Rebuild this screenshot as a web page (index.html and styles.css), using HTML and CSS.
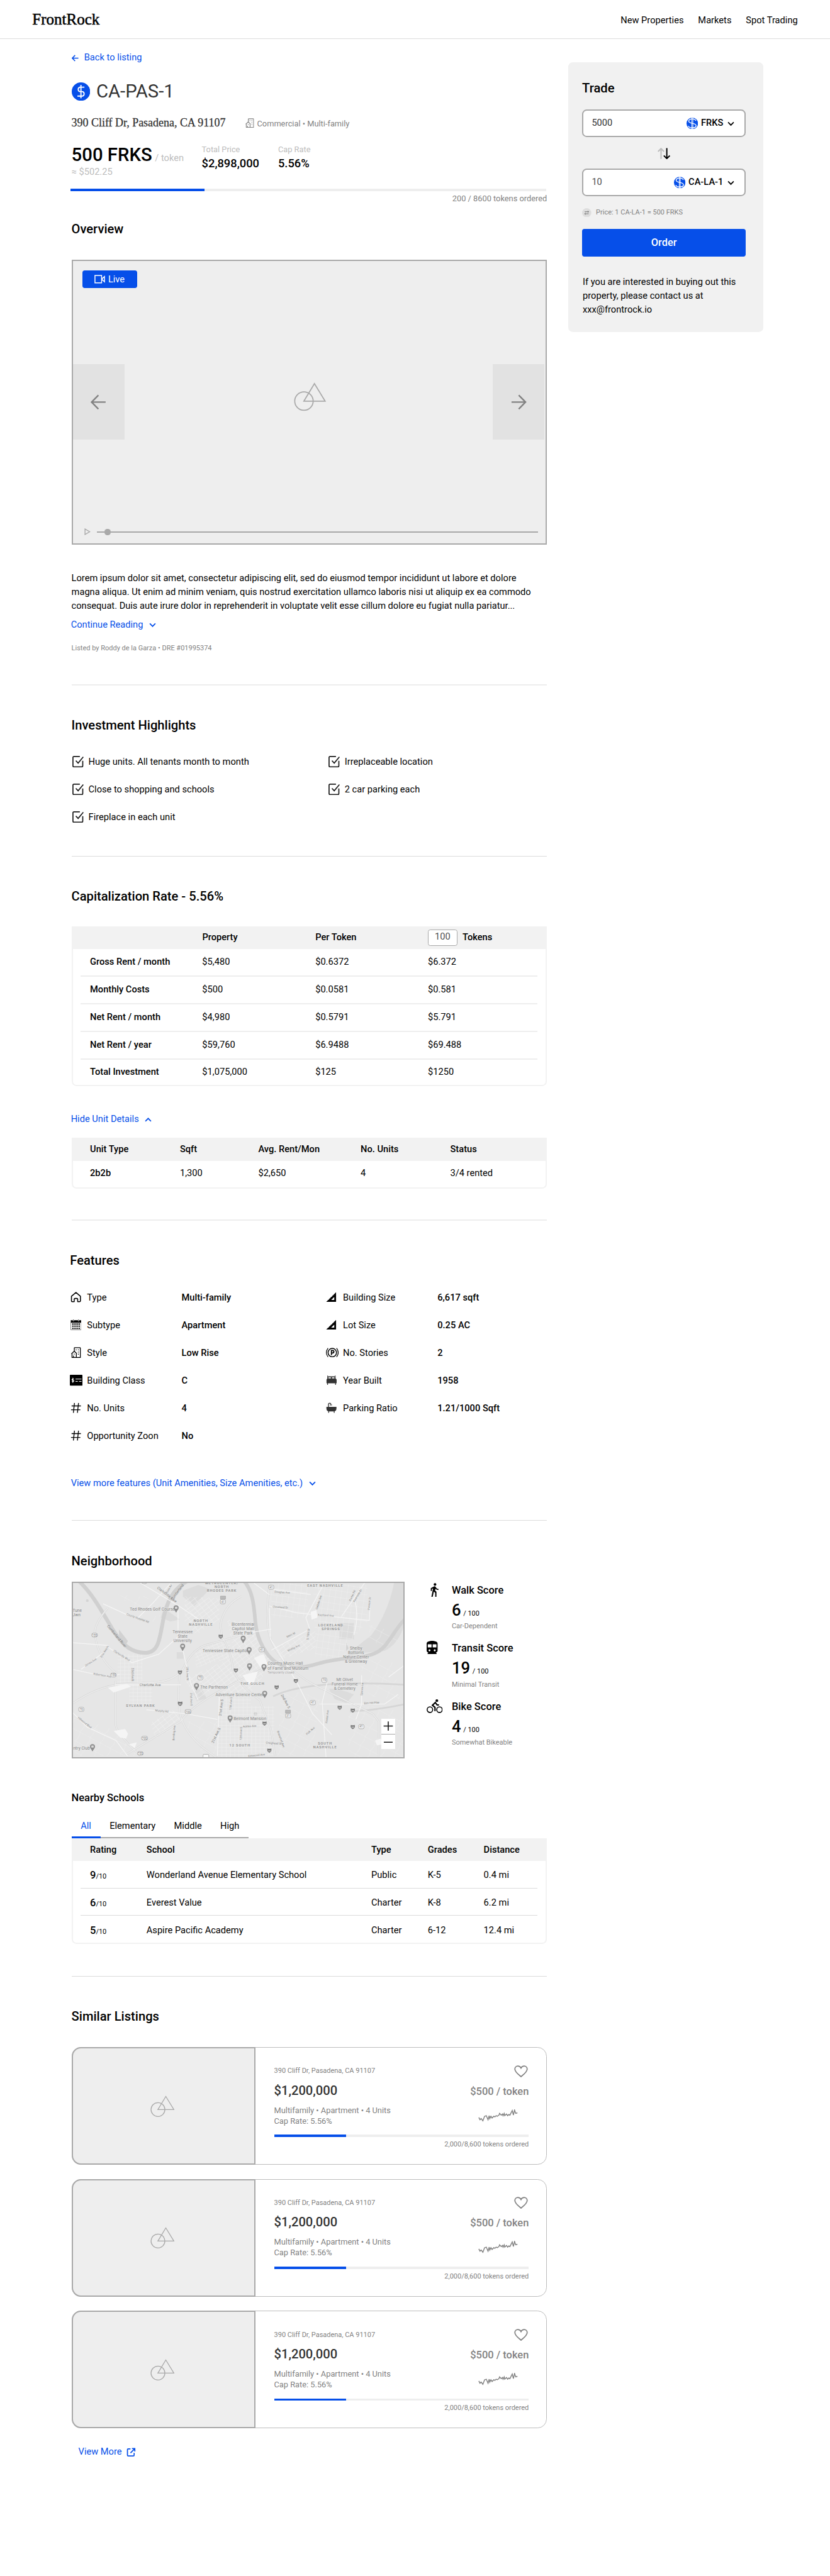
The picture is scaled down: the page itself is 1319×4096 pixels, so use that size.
FILE: index.html
```html
<!DOCTYPE html>
<html lang="en">
<head>
<meta charset="utf-8">
<title>FrontRock – CA-PAS-1</title>
<link rel="stylesheet" href="styles.css">
</head>
<body>
<svg class="defs" aria-hidden="true">
  <symbol id="i-left" viewBox="0 0 12 12"><path d="M11.5 6H1M5.8 1 .9 6l4.9 5" fill="none" stroke="currentColor" stroke-width="1.7"/></symbol>
  <symbol id="i-down" viewBox="0 0 12 12"><path d="M1.2 3.6 6 8.6l4.8-5" fill="none" stroke="currentColor" stroke-width="1.9"/></symbol>
  <symbol id="i-up" viewBox="0 0 12 12"><path d="M1.2 8.6 6 3.6l4.8 5" fill="none" stroke="currentColor" stroke-width="1.9"/></symbol>
  <symbol id="i-coin" viewBox="0 0 32 32"><circle cx="16" cy="16" r="16" fill="#064fe9"/><path d="M16 4.3v23.4M22 8.4h-8a4 4 0 0 0 0 7.6h4.4a4 4 0 0 1 0 7.8H9.8" fill="none" stroke="#fff" stroke-width="2"/></symbol>
  <symbol id="i-coin2" viewBox="0 0 20 20"><circle cx="10" cy="10" r="10" fill="#064fe9"/><path d="M9.2 0v20M11 0v20" stroke="#fff" stroke-width="1.1"/><path d="M16.3 5.6C15.6 3.4 13 2.3 10 2.3c-3.600 0-6.200 1.500-6.200 3.700 0 5.300 12.800 2.700 12.800 8 0 2.400-3 3.800-6.600 3.800-3.600 0-6.200-1.400-6.700-3.500" fill="none" stroke="#fff" stroke-width="1.5"/></symbol>
  <symbol id="i-building" viewBox="0 0 18 20"><path d="M6 7V1.700Q6 1 6.700 1h9.600q.7 0 .7.700V19H1.800v-7.500M.7 12.300 5.900 7.400l4.600 4.400M9.700 11.500V19M4.500 19v-3.600" fill="none" stroke="currentColor" stroke-width="1.500"/><path d="M8.600 4.200h1.500v1.500H8.600zm4 0h1.500v1.500h-1.500zm0 4h1.500v1.500h-1.500zm0 4h1.500v1.500h-1.500zM5 12h1.600v1.600H5z" fill="currentColor"/></symbol>
  <symbol id="i-image" viewBox="0 0 56 50"><circle cx="17.500" cy="32.500" r="16" fill="none" stroke="#a9a9a9" stroke-width="1.900"/><path d="M35.700 2.200 54.300 32.700h-37z" fill="none" stroke="#a9a9a9" stroke-width="1.900"/></symbol>
  <symbol id="i-check" viewBox="0 0 20 20"><path d="M13 1H2.800Q1 1 1 2.800v14.400Q1 19 2.800 19h13.400q1.800 0 1.800-1.800V8.500" fill="none" stroke="#1c1c1c" stroke-width="1.900"/><path d="m6 8.200 4 4.200L19 1.600" fill="none" stroke="#1c1c1c" stroke-width="1.900"/></symbol>
  <symbol id="i-home" viewBox="0 0 20 20"><path d="M1.800 8.200 10 1.300l8.200 6.900v8.300q0 1.700-1.700 1.700h-3.300v-4.400q0-1.600-1.600-1.600H8.400q-1.600 0-1.600 1.600v4.400H3.500q-1.700 0-1.700-1.700z" fill="none" stroke="#000" stroke-width="1.800" stroke-linejoin="round"/></symbol>
  <symbol id="i-calendar" viewBox="0 0 20 20"><path d="M.5 1.500h19v4.400H.5z"/><path d="M.6 5v14h18.800V5" fill="none" stroke="#555" stroke-width=".8"/><path d="M5.300 0v3.200M14.700 0v3.200" stroke="#fff" stroke-width="2"/><path d="M5.300 0v2.700M14.700 0v2.700" stroke="#000" stroke-width=".8"/><path d="M3.200 8.400h14M3.200 12.400h14M3.200 16.400h14" stroke="#000" stroke-width="2.500" stroke-dasharray="2.600 1.200"/></symbol>
  <symbol id="i-card" viewBox="0 0 22 19"><rect width="22" height="19" rx="1.200"/><path d="M9.800 7.500h10.500M9.800 11.500h4M16 11.500h4.300" stroke="#fff" stroke-width="1.100"/><path d="M7 7.300H4.800a1 1 0 0 0 0 2.200h1a1.100 1.100 0 0 1 0 2.300H3.300M5.200 5.200v8.600" fill="none" stroke="#fff" stroke-width="1.200"/></symbol>
  <symbol id="i-hash" viewBox="0 0 20 20"><path d="M7.300 1 5.300 19M14.700 1l-2 18M2 6.400h17M1 13.400h17" fill="none" stroke="#000" stroke-width="1.600"/></symbol>
  <symbol id="i-ruler" viewBox="0 0 20 20"><path d="M.5 18.500 18.500 1v17.500z"/><path d="m9.500 15 5.700-5.600V15z" fill="#fff"/><path d="m4 13.400 1.300 1M7 10.600l1.300 1M10 7.700l1.300 1M13 4.800l1.300 1" stroke="#fff" stroke-width=".9"/></symbol>
  <symbol id="i-park" viewBox="0 0 22 18"><circle cx="11" cy="9" r="7.300" fill="none" stroke="#000" stroke-width="1.600"/><path d="M3.600 1.300q-5.800 7.700 0 15.400M18.400 1.300q5.800 7.700 0 15.400" fill="none" stroke="#000" stroke-width="1.300"/><path d="M9.500 13.500V5.400h2.100a2.100 2.100 0 0 1 0 4.300H9.500" fill="none" stroke="#000" stroke-width="1.900"/></symbol>
  <symbol id="i-bed" viewBox="0 0 20 18"><path d="M2.500.3h1.200v1.500h12.600V.3h1.200v5.500h.5q1.500 1 1.500 2.500v6.200h-1.200v3h-1.500v-3H3.700v3H2.200v-3H1V8.300q0-1.500 1.500-2.500z" fill="#333"/><path d="M4.500 3.500H9v2H4.500zm6.500 0h4.500v2H11z" fill="#fff"/></symbol>
  <symbol id="i-bath" viewBox="0 0 20 20"><path d="M4.500 9V3.800Q4.600 1.300 6.800 1.300 9 1.300 9 4" fill="none" stroke="#333" stroke-width="1.500"/><path d="M7 4h4.200v1.200H7zM.8 8h18.400v2.500q0 4.500-3.400 5.500v3h-1.500v-2.500H5.700V19H4.200v-3Q.8 15 .8 10.500z" fill="#333"/></symbol>
  <symbol id="i-heart" viewBox="0 0 24 21"><path d="M12 19.600C7 15.600 1.300 11.400 1.300 6.500A5.300 5.300 0 0 1 6.500 1.200C9 1.200 11 2.500 12 4.700c1-2.200 3-3.500 5.500-3.500a5.300 5.300 0 0 1 5.200 5.300c0 4.900-5.700 9.100-10.700 13.100z" fill="none" stroke="#828282" stroke-width="1.900"/></symbol>
  <symbol id="i-spark" viewBox="0 0 74 22"><path d="m1 14 2 4 2-2 3 4 3-8 3-1 3 7 2-7 1 5 2-4 2 3 3-3 2 1 2-2 2 1 3-2 1-3 3 3 2-2 1 3 2-4 1 4 3-3 2 3 2-2 2 1 4-8 2 8 2-9 2 6 3-1" fill="none" stroke="#828282" stroke-width="1.600"/></symbol>
  <symbol id="i-ext" viewBox="0 0 16 16"><path d="M7 2H3.200Q1.700 2 1.700 3.500v9.300q0 1.500 1.500 1.500h8.600q1.500 0 1.500-1.500V9M9.500 1.600h5v5M14.300 1.800 7 9.200" fill="none" stroke="currentColor" stroke-width="1.900"/></symbol>
  <symbol id="pin" viewBox="0 0 28 40" overflow="visible"><path d="M14 1a13 13 0 0 1 13 13c0 9-8 13-11.500 24h-3C9 27 1 23 1 14A13 13 0 0 1 14 1z" fill="#8f8f8f"/><rect x="8" y="8" width="12" height="11" rx="2" fill="#dcdcdc"/></symbol>
  <symbol id="inter" viewBox="0 0 26 26" overflow="visible"><path d="M2 1q11 4 22 0 5 17-11 24Q-3 18 2 1z" fill="#7c7c7c"/><path d="M7 14h12" stroke="#d8d8d8" stroke-width="6" stroke-dasharray="5 2"/></symbol>
</svg>

<div class="page">
  <header class="top">
    <a class="logo">FrontRock</a>
    <nav class="nav"><a>New Properties</a><a>Markets</a><a>Spot Trading</a></nav>
  </header>

  <div class="layout">
    <main class="main">
      <a class="link back"><svg class="ic12"><use href="#i-left"/></svg><span>Back to listing</span></a>
      <div class="title"><svg class="coin"><use href="#i-coin"/></svg><h1>CA-PAS-1</h1></div>
      <div class="address"><span class="street">390 Cliff Dr, Pasadena, CA 91107</span><svg class="kind-icon"><use href="#i-building"/></svg><span class="kind">Commercial • Multi-family</span></div>
      <div class="stats">
        <div class="price"><div class="price-line"><b>500 FRKS</b><span>/ token</span></div><div class="approx">≈ $502.25</div></div>
        <div class="stat total"><span>Total Price</span><b>$2,898,000</b></div>
        <div class="stat"><span>Cap Rate</span><b>5.56%</b></div>
      </div>
      <div class="progress"><div class="bar" style="width:28.200%"></div></div>
      <div class="ordered">200 / 8600 tokens ordered</div>

      <h2 class="h-overview">Overview</h2>
      <div class="video">
        <div class="live"><svg class="cam" viewBox="0 0 19 15"><path d="M1 1h11.500v13H1zM12.500 7.500l5-4.500v9z" fill="none" stroke="#fff" stroke-width="1.600"/></svg><span>Live</span></div>
        <div class="slides">
          <div class="arrow"><svg viewBox="0 0 28 28"><path d="M27 14H2M14 1.500 1.800 14 14 26.500" fill="none" stroke="#828282" stroke-width="2.700"/></svg></div>
          <svg class="placeholder"><use href="#i-image"/></svg>
          <div class="arrow"><svg viewBox="0 0 28 28"><path d="M1 14h25M14 1.500 26.200 14 14 26.500" fill="none" stroke="#828282" stroke-width="2.700"/></svg></div>
        </div>
        <div class="player"><svg class="play" viewBox="0 0 11 12"><path d="M1.200 1.200 9.300 6l-8.100 4.800z" fill="none" stroke="#a9a9a9" stroke-width="1.500"/></svg><div class="track"><i></i></div></div>
      </div>
      <p class="lorem">Lorem ipsum dolor sit amet, consectetur adipiscing elit, sed do eiusmod tempor incididunt ut labore et dolore<br>magna aliqua. Ut enim ad minim veniam, quis nostrud exercitation ullamco laboris nisi ut aliquip ex ea commodo<br>consequat. Duis aute irure dolor in reprehenderit in voluptate velit esse cillum dolore eu fugiat nulla pariatur...</p>
      <a class="link more"><span>Continue Reading</span><svg class="ic12"><use href="#i-down"/></svg></a>
      <div class="listed">Listed by Roddy de la Garza • DRE #01995374</div>

      <hr class="hr-a">
      <h2 class="after-hr">Investment Highlights</h2>
      <div class="checks">
        <div><svg><use href="#i-check"/></svg><span>Huge units. All tenants month to month</span></div>
        <div><svg><use href="#i-check"/></svg><span>Irreplaceable location</span></div>
        <div><svg><use href="#i-check"/></svg><span>Close to shopping and schools</span></div>
        <div><svg><use href="#i-check"/></svg><span>2 car parking each</span></div>
        <div><svg><use href="#i-check"/></svg><span>Fireplace in each unit</span></div>
      </div>

      <hr class="hr-b thin">
      <h2 class="after-hr">Capitalization Rate - 5.56%</h2>
      <div class="table rates">
        <div class="head"><span></span><span>Property</span><span>Per Token</span><span class="qty"><i>100</i>Tokens</span></div>
        <div class="row"><b>Gross Rent / month</b><span>$5,480</span><span>$0.6372</span><span>$6.372</span></div>
        <div class="row"><b>Monthly Costs</b><span>$500</span><span>$0.0581</span><span>$0.581</span></div>
        <div class="row"><b>Net Rent / month</b><span>$4,980</span><span>$0.5791</span><span>$5.791</span></div>
        <div class="row"><b>Net Rent / year</b><span>$59,760</span><span>$6.9488</span><span>$69.488</span></div>
        <div class="row"><b>Total Investment</b><span>$1,075,000</span><span>$125</span><span>$1250</span></div>
      </div>
      <a class="link hide"><span>Hide Unit Details</span><svg class="ic12"><use href="#i-up"/></svg></a>
      <div class="table units">
        <div class="head"><span>Unit Type</span><span>Sqft</span><span>Avg. Rent/Mon</span><span>No. Units</span><span>Status</span></div>
        <div class="row"><b>2b2b</b><span>1,300</span><span>$2,650</span><span>4</span><span>3/4 rented</span></div>
      </div>

      <hr class="hr-c">
      <h2 class="after-hr shift">Features</h2>
      <div class="features">
        <div><svg><use href="#i-home"/></svg><span>Type</span><b>Multi-family</b></div>
        <div><svg><use href="#i-ruler"/></svg><span>Building Size</span><b>6,617 sqft</b></div>
        <div><svg><use href="#i-calendar"/></svg><span>Subtype</span><b>Apartment</b></div>
        <div><svg><use href="#i-ruler"/></svg><span>Lot Size</span><b>0.25 AC</b></div>
        <div><svg><use href="#i-building"/></svg><span>Style</span><b>Low Rise</b></div>
        <div><svg class="wide"><use href="#i-park"/></svg><span>No. Stories</span><b>2</b></div>
        <div><svg class="wide"><use href="#i-card"/></svg><span>Building Class</span><b>C</b></div>
        <div><svg><use href="#i-bed"/></svg><span>Year Built</span><b>1958</b></div>
        <div><svg><use href="#i-hash"/></svg><span>No. Units</span><b>4</b></div>
        <div><svg><use href="#i-bath"/></svg><span>Parking Ratio</span><b>1.21/1000 Sqft</b></div>
        <div><svg><use href="#i-hash"/></svg><span>Opportunity Zoon</span><b>No</b></div>
      </div>
      <a class="link view-features"><span>View more features (Unit Amenities, Size Amenities, etc.)</span><svg class="ic12"><use href="#i-down"/></svg></a>

      <hr class="hr-d thin">
      <h2 class="after-hr">Neighborhood</h2>
      <div class="hood">
        <div class="map">
          <svg viewBox="12 13 1734 918" preserveAspectRatio="none">
            <defs>
              <pattern id="g0" width="22" height="19" patternUnits="userSpaceOnUse"><path d="M0 1h22M1 0v19" stroke="#f1f1f1" stroke-width="2" fill="none"/></pattern>
              <pattern id="g1" width="24" height="17" patternUnits="userSpaceOnUse" patternTransform="rotate(-25)"><path d="M0 1h24M1 0v17" stroke="#f1f1f1" stroke-width="2" fill="none"/></pattern>
              <pattern id="g2" width="30" height="20" patternUnits="userSpaceOnUse" patternTransform="rotate(-38)"><path d="M0 1h30M1 0v20" stroke="#f1f1f1" stroke-width="2" fill="none"/></pattern>
              <pattern id="g3" width="30" height="34" patternUnits="userSpaceOnUse" patternTransform="rotate(8)"><path d="M0 1h30M1 0v34" stroke="#efefef" stroke-width="1.800" fill="none"/></pattern>
              <pattern id="g4" width="60" height="52" patternUnits="userSpaceOnUse" patternTransform="rotate(28)"><path d="M0 1h60M1 0q14 26 0 52" stroke="#ededed" stroke-width="1.800" fill="none"/></pattern>
            </defs>
            <rect x="0" y="0" width="1760" height="940" fill="#e6e6e6"/>
            <g fill="#dcdcdc">
              <path d="M1690 13h60v200q-30 120-110 160l-110 10-90 20q60-60 130-110 90-120 120-280z"/>
              <path d="M1405 228h75v85h-75zM640 590l45-30 28 60-50 15zM1350 570q60 0 130 30l-40 45-60-20zM490 150l85 60-50 10-50-20zM590 60l80-30 60 20-80 90-60-50zM558 380h36v34h-36z"/>
              <path d="M258 262l46 60-10 20-36-50zM1440 330l12 30-12 14z" fill="#d2d2d2"/><circle cx="968" cy="702" r="9" fill="#cfcfcf"/><circle cx="93" cy="112" r="7" fill="#d4d4d4"/>
            </g>
            <path d="M250 390h130v170H250zM310 540h120v110H310zM775 600h170v330H775zM945 660h120v260H945z" fill="url(#g0)"/>
            <path d="M1040 20h200v180h-190zM1270 30h280v190l-150 180-120 10zM1280 240l150-10v180h-120z" fill="url(#g3)"/>
            <path d="M600 90l180 10v110l-120 80-60-70zM420 750l120-70 60 60-150 90z" fill="url(#g2)"/>
            <path d="M820 210l140 20 70 160 20 60-100 130-140 20-90-80 130-160zM1080 350l200-80v90l-190 60zM600 520l220-100 40 90-200 120z" fill="url(#g2)"/>
            <path d="M650 360l170-60 50 100-210 60z" fill="url(#g1)"/>
            <path d="M20 720l220 60 130 140H20zM590 740h180v180H700zM1100 560l200 60-30 300h-190zM1450 640l290 50v240h-290zM1500 410l180 20 50 200-170-20zM240 80l180 10-60 80zM370 190h100v50zM1560 230l180 70-60 60-120-40z" fill="url(#g4)"/>
            <g fill="none" stroke="#d0d0d0" stroke-linecap="butt">
              <path d="M45 5C130 85 180 190 230 270S330 385 400 383C468 380 470 300 490 200 510 110 540 50 620 5" stroke-width="20"/>
              <path d="M905 5c50 55 55 135 62 215 10 110 63 180 103 210 60 40 130 38 230 8 130-38 230-18 300-58 60-30 90-120 146-172" stroke-width="19"/>
            </g>
            <g fill="none" stroke="#d6d6d6" stroke-width="9">
              <path d="M12 650q130-90 260-105l190-10q90-10 130-70 40-90 110-120l250-70M575 480q-15 130 0 220 20 90 110 170l80 60M240 530v230q10 50 130 160M1040 13l-10 130q-10 120 30 200 60 120 200 200l320 160 30 40v180M790 300q50 60 60 170 40 90 140 160l60 160 20 130M200 150q-80 90-66 150 20 120 110 190M895 90q-90 40-110 150l10 60M1060 610q180-90 690-60M1460 690q150-10 290-40M300 910q180-110 280-170 60-90 300-210l200-100"/>
            </g>
            <g fill="none" stroke="#ededed" stroke-width="5">
              <path d="M12 650q130-90 260-105l190-10q90-10 130-70 40-90 110-120l250-70M575 480q-15 130 0 220 20 90 110 170l80 60M240 530v230q10 50 130 160M1040 13l-10 130q-10 120 30 200 60 120 200 200l320 160 30 40v180M790 300q50 60 60 170 40 90 140 160l60 160 20 130M200 150q-80 90-66 150 20 120 110 190M895 90q-90 40-110 150l10 60M300 910q180-110 280-170 60-90 300-210l200-100"/>
            </g>
            <g fill="none" stroke="#f5f5f5" stroke-width="4">
              <path d="M175 128l120 55 60 20 80-80 90-100M370 20l200 120 120 80M200 345l-190-15M195 350l130 85 140-45 100-90V160M20 470l180 40 60-15M60 470l120-90M240 550h340M400 680l200 20 170 30M590 370l40 170 40 90M12 690l80 80 150 70 60 80M780 600l-10 320M1035 50l220 30M1040 140l140 35 380 40 5-110M1320 30l-90 170 20 60-200 110M1415 195l130-190M1480 100q30 80 0 190M870 290l180-30M1040 150l5 160 140 230 80 160 100 110M1300 650h340l70-50M1340 540l-25 100 20 290M1520 500v150l-30 80M960 20l80 60M1660 510l80-60"/>
            </g>
            <g fill="#f5f5f5"><path d="M230 790l60-10 15 25-10 25-30-5zM960 410l50-20 20 50-30 30zM900 500l80-20-20 60-30 5zM1255 170l30-10 5 40-30 10zM1590 840l30-10 10 30-30 5zM200 565l100-20 20 15-90 30zM310 860l40-10-10 30z"/></g>
            <g class="m-label">
              <text x="314" y="164">Ted Rhodes Golf Course</text><text x="17" y="170">Tune</text><text x="17" y="192">Jwn</text>
              <g text-anchor="middle"><text x="589" y="282">Tennessee</text><text x="589" y="305">State</text><text x="589" y="327">University</text>
              <text x="903" y="241">Bicentennial</text><text x="903" y="264">Capitol Mall</text><text x="903" y="287">State Park</text>
              <text x="1491" y="367">Shelby</text><text x="1491" y="390">Bottoms</text><text x="1491" y="413">Nature Center</text><text x="1491" y="436">&amp; Greenway</text>
              <text x="1432" y="531">Mt Olivet</text><text x="1432" y="554">Funeral Home</text><text x="1432" y="577">&amp; Cemetery</text></g>
              <text x="693" y="381">Tennessee State Capitol</text><text x="681" y="569">The Parthenon</text><text x="760" y="608">Adventure Science Center</text>
              <text x="1031" y="447">Country Music Hall</text><text x="1031" y="470">of Fame and Museum</text><text x="1031" y="490" class="m-small">Temporarily closed</text>
              <text x="854" y="735">Belmont Mansion</text><text x="20" y="887">ntry Club</text>
            </g>
            <g class="m-area" text-anchor="middle">
              <text x="793" y="27">METROCENTER/</text><text x="793" y="47">NORTH</text><text x="793" y="67">RHODES PARK</text>
              <text x="684" y="223">NORTH</text><text x="684" y="243">NASHVILLE</text><text x="1331" y="40">EAST NASHVILLE</text>
              <text x="1360" y="246">LOCKELAND</text><text x="1360" y="266">SPRINGS</text><text x="370" y="664">SYLVAN PARK</text>
              <text x="953" y="550">THE GULCH</text><text x="887" y="871">12 SOUTH</text><text x="1330" y="860">SOUTH</text><text x="1330" y="880">NASHVILLE</text>
            </g>
            <g class="m-road">
              <text transform="translate(455 47) rotate(38)" class="m-big">Clarksville Pike</text><text transform="translate(195 245) rotate(50)" class="m-big">Cumberland River</text><text transform="translate(537 112) rotate(-54)" class="m-big">Cumberland</text>
              <text transform="translate(365 557)" class="m-big">Charlotte Ave</text><text transform="translate(296 186) rotate(20)">County Hospital Rd</text><text transform="translate(228 376) rotate(32)">Clarksville Blvd</text>
              <text transform="translate(168 410) rotate(-58)">51st Ave N</text><text transform="translate(82 456) rotate(-32)">James Ave</text><text transform="translate(124 497) rotate(10)">Robertson Ave</text>
              <text transform="translate(323 462) rotate(90)">33rd Ave N</text><text transform="translate(608 456) rotate(88)">28th Ave N</text><text transform="translate(628 592) rotate(88)">31st Ave S</text>
              <text transform="translate(446 688) rotate(5)">Murphy Rd</text><text transform="translate(42 724) rotate(38)">Hillwood Blvd</text><text transform="translate(546 840) rotate(-86)">Bowling Ave</text>
              <text transform="translate(790 712) rotate(-83)" class="m-big">21st Ave S</text><text transform="translate(750 855) rotate(-65)" class="m-big">21st Ave S</text><text transform="translate(842 682) rotate(-86)">17th Ave S</text><text transform="translate(896 838) rotate(-88)">12th Ave S</text>
              <text transform="translate(508 76) rotate(-60)">Rosa Av</text><text transform="translate(1067 70) rotate(4)">Douglas Ave</text><text transform="translate(1057 148) rotate(4)">Cleveland St</text><text transform="translate(1290 158) rotate(-72)">Gallatin Ave</text>
              <text transform="translate(1292 190) rotate(4)">Eastland Ave</text><text transform="translate(1464 115) rotate(-66)">Porter Rd</text><text transform="translate(1484 120) rotate(-60)">Riverside Dr</text><text transform="translate(1562 160) rotate(-85)">Preston Dr</text>
              <text transform="translate(1132 305) rotate(-26)">Main St</text><text transform="translate(1244 316) rotate(-84)">S 10th St</text><text transform="translate(1137 378) rotate(-26)">Shelby Ave</text>
              <text transform="translate(1100 603) rotate(62)" class="m-big">2nd Ave S</text><text transform="translate(1342 750) rotate(-84)">Foster Ave</text><text transform="translate(1236 812) rotate(-42)">Polk Ave</text>
              <text transform="translate(902 772) rotate(-3)">Acklen Ave</text><text transform="translate(1080 792) rotate(70)">Bransford Ave</text><text transform="translate(1022 856) rotate(4)">Craighead St</text>
              <text transform="translate(1524 606) rotate(-86)">Spence Ln</text><text transform="translate(1533 652) rotate(-4)">Elm Hill Pike</text><text transform="translate(930 926) rotate(-6)">Kirkwood Ave</text>
            </g>
            <g>
              <use href="#pin" x="541" y="135" width="28" height="40"/><use href="#pin" x="575" y="335" width="28" height="40"/><use href="#pin" x="890" y="294" width="28" height="40"/><use href="#pin" x="921" y="353" width="28" height="40"/>
              <use href="#pin" x="923" y="437" width="28" height="40"/><use href="#pin" x="998" y="441" width="28" height="40"/><use href="#pin" x="647" y="540" width="28" height="40"/><use href="#pin" x="1002" y="580" width="28" height="40"/>
              <use href="#pin" x="822" y="708" width="28" height="40"/><use href="#pin" x="106" y="858" width="28" height="40"/>
              <use href="#inter" x="775" y="287" width="24" height="24"/><use href="#inter" x="854" y="463" width="24" height="24"/><use href="#inter" x="563" y="474" width="24" height="24"/><use href="#inter" x="562" y="636" width="28" height="26"/>
              <use href="#inter" x="1166" y="518" width="24" height="24"/><use href="#inter" x="1066" y="552" width="24" height="24"/><use href="#inter" x="1394" y="657" width="24" height="24"/><use href="#inter" x="1462" y="672" width="24" height="24"/>
              <use href="#inter" x="1462" y="758" width="24" height="24"/><use href="#inter" x="1003" y="740" width="24" height="24"/><use href="#inter" x="1028" y="881" width="24" height="24"/>
            </g>
            <g class="m-shield">
              <rect x="785" y="106" width="26" height="22" rx="6"/><rect x="116" y="281" width="30" height="20" rx="9"/><rect x="214" y="489" width="30" height="20" rx="9"/><rect x="668" y="502" width="26" height="22" rx="6"/><rect x="49" y="667" width="26" height="22" rx="6"/><rect x="602" y="679" width="30" height="21" rx="6"/><rect x="375" y="818" width="32" height="20" rx="9"/><rect x="354" y="898" width="30" height="19" rx="9"/><rect x="695" y="912" width="30" height="20" rx="6"/><rect x="375" y="4" width="28" height="19" rx="9"/>
              <rect x="1037" y="31" width="26" height="22" rx="6"/><rect x="987" y="356" width="26" height="22" rx="6"/><rect x="1313" y="514" width="26" height="23" rx="6"/><rect x="1252" y="632" width="27" height="22" rx="6"/><rect x="1124" y="700" width="27" height="22" rx="6"/><rect x="1505" y="757" width="27" height="22" rx="6"/>
              <path d="M786 88h26v15h-26zM1124 682h26v15h-26z" class="alt"/>
            </g>
            <g class="m-num" text-anchor="middle"><text x="798" y="123">41</text><text x="131" y="297">155</text><text x="229" y="505">155</text><text x="681" y="519">70</text><text x="62" y="684">70</text><text x="617" y="696">70S</text><text x="391" y="834">70S</text><text x="369" y="913">155</text><text x="1050" y="48">41</text><text x="1000" y="373">41</text><text x="1326" y="531">70</text><text x="1265" y="649">41</text><text x="1137" y="717">31</text><text x="1518" y="774">41</text></g>
          </svg>
          <div class="zoomer"><svg viewBox="0 0 24 26"><path d="M4 12.500h16M12 4.500v16" stroke="#111" stroke-width="1.700"/></svg><svg viewBox="0 0 24 26"><path d="M4 14h16" stroke="#111" stroke-width="1.700"/></svg></div>
        </div>
        <div class="scores">
          <div class="score"><svg viewBox="0 0 28 24"><circle cx="14.500" cy="2.600" r="2.300"/><path d="M12.800 6q2-.6 2.900 1 1.200 3 4.800 3.300v2q-3.200-.1-5.200-2.200l-.6 3.100 2.300 2.200V24h-2.100v-6.800l-2.400-2.300L10.500 24H8.200l3-14.500-2 .9v3.500H7.200V9z"/></svg><div><h4>Walk Score</h4><p><b>6</b>/ 100</p><small>Car-Dependent</small></div></div>
          <div class="score"><svg viewBox="0 0 28 24"><path d="M3.500 1Q9.500-.8 15.500 1 19 1.800 19 5v11.500Q19 20 16 20.500l1.500 1.800V23h-16v-.7L3 20.500Q0 20 0 16.500V5q0-3.200 3.500-4z"/><path d="M2 6h6.500v5.500H2zm8.500 0H17v5.500h-6.500z" fill="#fff"/><circle cx="5" cy="16.500" r="1.700" fill="#fff"/><circle cx="14" cy="16.500" r="1.700" fill="#fff"/></svg><div><h4>Transit Score</h4><p><b>19</b>/ 100</p><small>Minimal Transit</small></div></div>
          <div class="score"><svg viewBox="0 0 28 24"><circle cx="5.700" cy="18" r="4.800" fill="none" stroke="#000" stroke-width="1.700"/><circle cx="22.300" cy="18" r="4.800" fill="none" stroke="#000" stroke-width="1.700"/><circle cx="17.700" cy="2.400" r="2.300"/><path d="M21.500 9.800h-3.300L15 5.600 10 10.300l4.500 3.700v6.500" fill="none" stroke="#000" stroke-width="2.300"/></svg><div><h4>Bike Score</h4><p><b>4</b>/ 100</p><small>Somewhat Bikeable</small></div></div>
        </div>
      </div>

      <h3>Nearby Schools</h3>
      <div class="tabs"><a class="on">All</a><a>Elementary</a><a>Middle</a><a>High</a></div>
      <div class="table schools">
        <div class="head"><span>Rating</span><span>School</span><span>Type</span><span>Grades</span><span>Distance</span></div>
        <div class="row"><span class="rate"><b>9</b>/10</span><span>Wonderland Avenue Elementary School</span><span>Public</span><span>K-5</span><span>0.4 mi</span></div>
        <div class="row"><span class="rate"><b>6</b>/10</span><span>Everest Value</span><span>Charter</span><span>K-8</span><span>6.2 mi</span></div>
        <div class="row"><span class="rate"><b>5</b>/10</span><span>Aspire Pacific Academy</span><span>Charter</span><span>6-12</span><span>12.4 mi</span></div>
      </div>

      <hr class="hr-e thin">
      <h2 class="after-hr">Similar Listings</h2>
      <div class="cards">
        <article class="card">
          <div class="photo"><svg><use href="#i-image"/></svg></div>
          <div class="info">
            <div class="line l1"><span>390 Cliff Dr, Pasadena, CA 91107</span><svg><use href="#i-heart"/></svg></div>
            <div class="line l2"><b>$1,200,000</b><em>$500 / token</em></div>
            <div class="line l3"><span>Multifamily • Apartment • 4 Units<br>Cap Rate: 5.56%</span><svg><use href="#i-spark"/></svg></div>
            <div class="progress"><div class="bar" style="width:28.200%"></div></div>
            <div class="cap">2,000/8,600 tokens ordered</div>
          </div>
        </article>
        <article class="card">
          <div class="photo"><svg><use href="#i-image"/></svg></div>
          <div class="info">
            <div class="line l1"><span>390 Cliff Dr, Pasadena, CA 91107</span><svg><use href="#i-heart"/></svg></div>
            <div class="line l2"><b>$1,200,000</b><em>$500 / token</em></div>
            <div class="line l3"><span>Multifamily • Apartment • 4 Units<br>Cap Rate: 5.56%</span><svg><use href="#i-spark"/></svg></div>
            <div class="progress"><div class="bar" style="width:28.200%"></div></div>
            <div class="cap">2,000/8,600 tokens ordered</div>
          </div>
        </article>
        <article class="card">
          <div class="photo"><svg><use href="#i-image"/></svg></div>
          <div class="info">
            <div class="line l1"><span>390 Cliff Dr, Pasadena, CA 91107</span><svg><use href="#i-heart"/></svg></div>
            <div class="line l2"><b>$1,200,000</b><em>$500 / token</em></div>
            <div class="line l3"><span>Multifamily • Apartment • 4 Units<br>Cap Rate: 5.56%</span><svg><use href="#i-spark"/></svg></div>
            <div class="progress"><div class="bar" style="width:28.200%"></div></div>
            <div class="cap">2,000/8,600 tokens ordered</div>
          </div>
        </article>
      </div>
      <a class="link view-more"><span>View More</span><svg><use href="#i-ext"/></svg></a>
    </main>

    <aside class="trade">
      <h2>Trade</h2>
      <div class="field"><span class="amount">5000</span><svg class="c20"><use href="#i-coin2"/></svg><b>FRKS</b><svg class="ic12"><use href="#i-down"/></svg></div>
      <svg class="swap" viewBox="0 0 22 20"><path d="M6 19.500V2M.8 6.500 6 1.300l5.200 5.200" fill="none" stroke="#bdbdbd" stroke-width="2.200"/><path d="M16 .5V18M10.800 13.500 16 18.700l5.200-5.200" fill="none" stroke="#000" stroke-width="2.200"/></svg>
      <div class="field"><span class="amount soft">10</span><svg class="c20"><use href="#i-coin2"/></svg><b>CA-LA-1</b><svg class="ic12"><use href="#i-down"/></svg></div>
      <div class="quote"><svg viewBox="0 0 16 16"><circle cx="8" cy="8" r="8" fill="#dedede"/><path d="M4.500 6.200h7M9.800 4.500l1.700 1.700-1.700 1.700M11.500 9.800h-7M6.200 8.100 4.500 9.800l1.700 1.700" fill="none" stroke="#666" stroke-width=".9"/></svg><span>Price: 1 CA-LA-1 = 500 FRKS</span></div>
      <button>Order</button>
      <p>If you are interested in buying out this<br>property, please contact us at<br>xxx@frontrock.io</p>
    </aside>
  </div>
</div>
</body>
</html>
```
FILE: styles.css
```css
* { box-sizing: border-box; }
body { margin: 0; background: #fff; }
.defs { position: absolute; width: 0; height: 0; }
h1, h2, h3, h4, p { margin: 0; font-weight: 500; }
b { font-weight: 500; }
i, em { font-style: normal; }
svg { display: block; flex: none; }

.page {
  zoom: 0.91597;
  width: 1440px;
  height: 4472px;
  font: 16px/24px Roboto, "Liberation Sans", sans-serif;
  color: #000;
}

/* header */
.top { display: flex; align-items: center; justify-content: space-between; height: 68px; padding: 0 56px; border-bottom: 1.1px solid #dcdcdc; }
.logo { font: 400 27.3px/32px "Liberation Serif", "Times New Roman", serif; -webkit-text-stroke: .6px #000; }
.nav { display: flex; gap: 25px; padding-top: 2.4px; margin-bottom: -8px; height: 32px; }

.layout { display: flex; align-items: flex-start; padding-left: 124px; }
.main { width: 825px; display: flex; flex-direction: column; }

.link { display: flex; align-items: center; color: #064fe9; margin-left: -1px; }
.ic12 { width: 12px; height: 12px; }
.back { margin: 20.5px 0 0; gap: 10px; }
.title { display: flex; align-items: center; gap: 11px; margin-top: 26.7px; }
.coin { width: 32px; height: 32px; }
h1 { font-size: 32px; line-height: 40px; font-weight: 400; color: #333; }

.address { display: flex; align-items: center; margin-top: 22.5px; color: #828282; }
.street { width: 302px; font: 400 19.6px/24px "Liberation Serif", "Times New Roman", serif; color: #333; -webkit-text-stroke: .3px #333; }
.kind-icon { width: 15px; height: 17px; }
.kind { margin: 1.3px 0 -1.3px 5px; font-size: 14px; }

.stats { display: flex; height: 60px; margin-top: 25.3px; }
.price { width: 226px; }
.price-line { display: flex; align-items: baseline; gap: 5px; height: 36px; line-height: 36px; color: #bdbdbd; }
.price-line b { font-size: 32px; color: #000; }
.approx { color: #bdbdbd; }
.stat { display: flex; flex-direction: column; gap: 4px; padding-top: 1.4px; }
.stat span { font-size: 14px; line-height: 16px; color: #bdbdbd; }
.stat b { font-size: 20px; }
.total { width: 132.5px; }
.progress { height: 4px; margin: 16.4px 0 0 -2px; width: 826px; background: #eee; }
.bar { height: 100%; background: #064fe9; }
.ordered { margin-top: 6.2px; text-align: right; font-size: 14px; line-height: 16px; color: #828282; }

h2 { font-size: 22px; line-height: 24px; }
.h-overview { margin-top: 31.9px; }

/* video */
.video { height: 495.2px; margin-top: 41.1px; border: 2.2px solid #a9a9a9; background: #eee; padding: 17.2px 13.5px 14px 16.5px; display: flex; flex-direction: column; }
.live { display: flex; align-items: center; gap: 5px; width: 95.5px; height: 30px; padding-left: 21px; border-radius: 4px; background: #064fe9; color: #fff; }
.live span { margin: 1.2px 0 -1.2px; }
.cam { width: 19px; height: 15px; }
.slides { display: flex; align-items: center; justify-content: space-between; margin: 132.5px -11.3px 0 -16.5px; height: 131px; }
.arrow { display: flex; align-items: center; justify-content: center; width: 89.5px; height: 131px; background: #e2e2e2; }
.arrow svg { width: 27px; height: 27px; }
.placeholder { width: 56px; height: 50px; margin: -18px 0 0 4.6px; }
.player { display: flex; align-items: center; gap: 11px; margin-top: auto; padding-left: 4px; }
.play { width: 11px; height: 12px; }
.track { flex: 1; height: 2px; background: #a9a9a9; display: flex; align-items: center; }
.track i { flex: none; width: 10px; height: 10px; border-radius: 5px; background: #a9a9a9; margin-left: 13px; }

.lorem { margin-top: 46.5px; font-weight: 400; white-space: nowrap; }
.more { margin-top: 8.9px; gap: 10.5px; }
.listed { margin-top: 20.8px; font-size: 12px; line-height: 16px; color: #828282; }

hr { width: 100%; height: 2px; margin: 0; border: 0; background: #eee; }
hr.thin { height: 1.1px; background: #dcdcdc; }
.hr-a { margin-top: 53.6px; }
.after-hr { margin-top: 57.4px; }
.checks { display: grid; grid-template-columns: 444.5px 1fr; row-gap: 23.6px; margin: 39.8px 0 0 1.5px; }
.checks div { display: flex; align-items: center; gap: 8px; }
.checks svg { width: 20px; height: 20px; }
.checks span { margin: 1px 0 -1px; }

/* tables */
.hr-b { margin-top: 55.5px; }
.table { border: 2.2px solid #f2f2f2; border-top: 0; border-radius: 0 0 8px 8px; }
.head, .row { display: grid; align-items: start; }
.head { height: 40px; margin: 0 -2px; padding: 8.4px 32px 0; background: #f2f2f2; font-weight: 500; }
.row { height: 48px; margin: 0 14px; padding: 10.4px 16px 0; border-bottom: 2.2px solid #eee; }
.row:last-child { height: 46px; border-bottom: 0; }
.rates { margin-top: 39.8px; height: 278px; }
.rates .head, .rates .row { grid-template-columns: 194.7px 196.3px 195.3px 1fr; }
.qty { display: flex; gap: 9px; }
.qty i { width: 51px; height: 28px; margin-top: -2.4px; padding-top: .5px; text-align: center; border: 2px solid #a9a9a9; border-radius: 4px; background: #fff; color: #4f4f4f; font-weight: 400; }
.hide { margin-top: 45.9px; gap: 10.5px; }
.units { margin-top: 19.5px; height: 88px; }
.units .head, .units .row { grid-template-columns: 156px 136px 177.5px 155.5px 1fr; }
.hr-c { margin-top: 54px; }

/* features */
.shift { margin-left: -2.5px; }
.features { display: grid; grid-template-columns: 444px 1fr; row-gap: 24px; margin: 40.1px 0 0 -2px; }
.features div { display: grid; grid-template-columns: 29px 164px 1fr; align-items: center; }
.features span, .features b { margin: 1px 0 -1px; }
.features svg { width: 19px; height: 19px; }
.features .wide { width: 22px; height: 19px; margin-left: -1px; }
.view-features { margin-top: 58.8px; gap: 10.5px; }
.hr-d { margin-top: 51.8px; }

/* neighborhood */
.hood { display: flex; gap: 38px; margin-top: 24.8px; }
.map { position: relative; width: 578.3px; height: 306px; }
.map > svg { width: 100%; height: 100%; }
.map::after { content: ""; position: absolute; inset: 0; border: 2.2px solid #a9a9a9; }
.m-label { font-size: 21.5px; fill: #858585; stroke: #ececec; stroke-width: 3px; paint-order: stroke; letter-spacing: .2px; }
.m-small { font-size: 16px; fill: #a5a5a5; }
.m-area { font-size: 18.5px; letter-spacing: 3px; fill: #8a8a8a; font-weight: 500; }
.m-road { font-size: 14.5px; fill: #8a8a8a; }
.m-big { font-size: 18.5px; fill: #7d7d7d; }
.m-shield { fill: #f7f7f7; stroke: #8a8a8a; stroke-width: 2; }
.m-shield .alt { fill: #bbb; stroke: #999; }
.m-num { font-size: 15px; fill: #777; }
.zoomer { position: absolute; right: 16.5px; bottom: 16px; z-index: 1; width: 24px; display: flex; flex-direction: column; background: #fff; }
.zoomer svg { width: 24px; height: 26px; }
.zoomer svg + svg { border-top: 1.1px solid #a9a9a9; }
.scores { display: flex; flex-direction: column; gap: 16.4px; padding-top: 1.5px; }
.score { display: flex; gap: 16px; height: 84.6px; margin-left: -.5px; }
.score > svg { width: 28px; height: 24px; }
.score > div { margin-top: 1.2px; }
h4 { font-size: 18px; line-height: 24px; }
.score p { margin-top: 6.6px; font-size: 12px; line-height: 32px; height: 32px; font-weight: 400; }
.score p b { font-size: 28px; margin-right: 4px; }
.score small { display: block; margin-top: 4.5px; font-size: 12px; line-height: 16px; color: #828282; }

/* schools */
h3 { margin-top: 56.7px; font-size: 18px; line-height: 24px; }
.tabs { display: flex; align-self: flex-start; margin-top: 25.5px; height: 32.5px; }
.tabs a { padding: 0 16px; border-bottom: 2.2px solid #a9a9a9; }
.tabs .on { color: #064fe9; border-bottom: 3.3px solid #064fe9; }
.schools { height: 183.5px; }
.schools .head { height: 39.5px; padding-top: 8.9px; }
.schools .row { height: 47.8px; padding-top: 13.5px; border-bottom: 1.1px solid #dcdcdc; }
.schools .row:last-child { border: 0; }
.schools .head, .schools .row { grid-template-columns: 98px 390px 98px 97px 1fr; }
.rate { font-size: 12px; }
.rate b { font-size: 18px; }
.hr-e { margin-top: 55.5px; }

/* listings */
.cards { display: flex; flex-direction: column; gap: 24.3px; margin-top: 41.3px; }
.card { display: flex; height: 204.5px; border-radius: 16px; border: 1.1px solid #bdbdbd; color: #828282; }
.photo { width: 319px; margin: -1.1px 0 -1.1px -1.1px; display: flex; align-items: center; justify-content: center; background: #eee; border: 2.2px solid #a9a9a9; border-radius: 16px 0 0 16px; }
.photo svg { width: 42px; height: 37.5px; margin: 0 3px 0 0; }
.info { flex: 1; padding: 30px 30.5px 0 32.5px; }
.line { display: flex; justify-content: space-between; }
.l1 { font-size: 12px; line-height: 16px; padding-top: 3.2px; height: 32px; }
.l1 svg { width: 24px; height: 21px; margin: -3px 1px 0 0; }
.l2 { align-items: baseline; height: 24px; }
.l2 b { font-size: 22px; color: #333; }
.l2 em { font-size: 18px; font-weight: 500; }
.l3 { margin-top: 14.2px; font-size: 14px; line-height: 18.3px; }
.l3 svg { width: 74px; height: 22px; margin: 6.3px 13.5px 0 0; }
.info .progress { width: auto; margin: 14.3px 0 0; }
.cap { margin-top: 5.4px; font-size: 12px; line-height: 16px; text-align: right; }
.view-more { margin: 29px 0 0 12px; gap: 8px; }
.view-more svg { width: 16px; height: 16px; }

/* trade */
.trade { width: 338px; height: 468px; margin: 40px 0 0 37px; padding: 33.4px 30px 0 24px; border-radius: 8px; background: #f1f1f1; display: flex; flex-direction: column; }
.field { display: flex; align-items: center; height: 48px; padding: 0 18px 0 14.5px; border: 2.2px solid #a9a9a9; border-radius: 8px; background: #fff; }
.trade h2 { margin-bottom: 24.8px; }
.amount { flex: 1; color: #333; }
.soft { color: #4f4f4f; }
.c20 { width: 20px; height: 20px; margin-right: 5px; }
.field .ic12 { margin-left: 7px; }
.swap { width: 22px; height: 20px; margin: 18px auto 17px; }
.quote { display: flex; align-items: center; gap: 8px; height: 16px; margin: 20px 0; font-size: 12px; color: #828282; }
.quote svg { width: 16px; height: 16px; }
.trade button { height: 48px; border: 0; border-radius: 4px; background: #064fe9; color: #fff; font: 500 18px/24px Roboto, sans-serif; padding: 0; }
.trade p { margin: 32.7px 0 0 1px; font-weight: 400; white-space: nowrap; }
```
